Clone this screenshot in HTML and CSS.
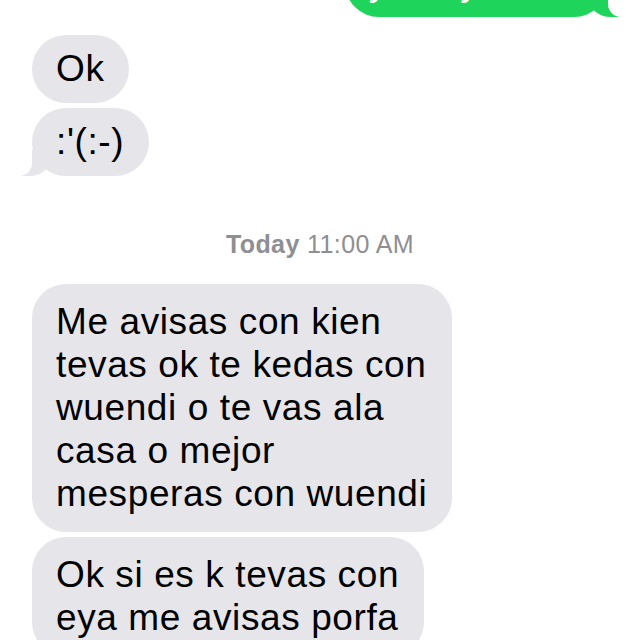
FILE: index.html
```html
<!DOCTYPE html>
<html lang="es">
<head>
<meta charset="utf-8">
<title>Mensajes</title>
<link rel="stylesheet" href="styles.css">
</head>
<body>
<div class="thread">
  <div class="row out"><div class="bubble green tail">ya voy mami</div></div>
  <div class="row in first"><div class="bubble grey">Ok</div></div>
  <div class="row in tight"><div class="bubble grey tail">:'(:-)</div></div>
  <div class="stamp"><b>Today</b> 11:00 AM</div>
  <div class="row in"><div class="bubble grey multi">Me avisas con kien<br>tevas ok te kedas con<br>wuendi o te vas ala<br>casa o mejor<br>mesperas con wuendi</div></div>
  <div class="row in tight"><div class="bubble grey multi">Ok si es k tevas con<br>eya me avisas porfa</div></div>
</div>
</body>
</html>
```
FILE: styles.css
```css
html, body {
  margin: 0;
  background: #fff;
}
body {
  height: 640px;
  overflow: hidden;
  font-family: "Liberation Sans", Arial, sans-serif;
}
.thread {
  display: flex;
  flex-direction: column;
  padding: 0 32px;
  margin-top: -51px;
}
.row {
  display: flex;
}
.row.out {
  justify-content: flex-end;
}
.row.first {
  margin-top: 18px;
}
.row.tight {
  margin-top: 5px;
}
.bubble {
  position: relative;
  font-size: 37px;
  line-height: 43px;
  letter-spacing: 0.6px;
  padding: 12px 25px 13px 24px;
  border-radius: 34px;
}
.bubble.multi {
  padding-top: 16px;
  padding-bottom: 17px;
}
.grey {
  background: #e5e5ea;
  color: #000;
}
.green {
  background: #1fd45a;
  color: #fff;
}
.grey.tail::before,
.grey.tail::after,
.green.tail::before,
.green.tail::after {
  content: "";
  position: absolute;
  bottom: 0;
  height: 26px;
}
.grey.tail::before {
  left: -11px;
  width: 30px;
  background: #e5e5ea;
  border-bottom-right-radius: 22px 18px;
}
.grey.tail::after {
  left: -30px;
  width: 30px;
  background: #fff;
  border-bottom-right-radius: 13px;
}
.green.tail::before {
  right: -11px;
  width: 30px;
  background: #1fd45a;
  border-bottom-left-radius: 22px 18px;
}
.green.tail::after {
  right: -30px;
  width: 30px;
  background: #fff;
  border-bottom-left-radius: 13px;
}
.stamp {
  margin: 53px 0 25px;
  text-align: center;
  font-size: 25px;
  line-height: 30px;
  letter-spacing: 0.4px;
  color: #8e8e93;
}
.stamp b {
  font-weight: bold;
}
```
